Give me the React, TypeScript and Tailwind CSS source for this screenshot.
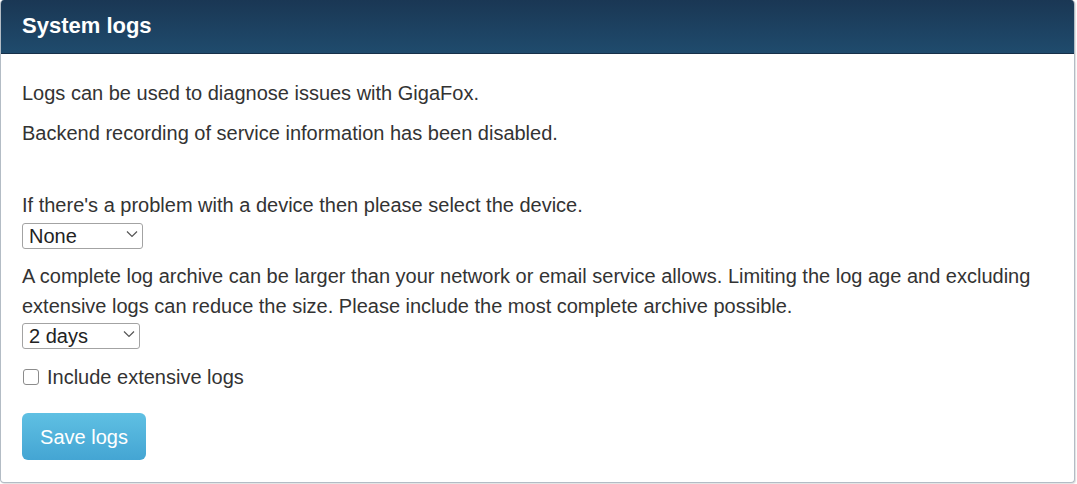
import React from 'react';

const FONT = "font-['Liberation_Sans',Arial,sans-serif]";

function Chevron() {
  return (
    <svg
      className="pointer-events-none absolute right-[5px] top-1/2 -translate-y-1/2"
      width="12"
      height="7"
      viewBox="0 0 12 7"
      fill="none"
    >
      <path d="M1 1l5 5 5-5" stroke="#555" strokeWidth="1.2" />
    </svg>
  );
}

function Select({ value, options, width, className = '' }: { value: string; options: string[]; width: string; className?: string }) {
  return (
    <div className={`relative ${width} h-[26px] ${className}`}>
      <select
        defaultValue={value}
        className="h-full w-full appearance-none rounded-[3px] border border-[#a3a3a3] bg-white pl-[6px] text-[20px] leading-[24px] text-[#222] outline-none"
      >
        {options.map((o) => (
          <option key={o}>{o}</option>
        ))}
      </select>
      <Chevron />
    </div>
  );
}

export default function App() {
  return (
    <div className={`${FONT} bg-white w-[1077px] h-[484px]`}>
      <div className="w-[1075px] h-[483px] overflow-hidden rounded-[4px] border border-[#b3bcc5] border-t-0 bg-white shadow-[1px_1px_1px_rgba(0,0,0,0.12)]">
        {/* Header */}
        <div className="h-[54px] px-[21px] flex items-center bg-gradient-to-b from-[#1a3754] to-[#1f4b6d] border-b border-[#163049]">
          <h1 className="text-[22px] font-bold text-white leading-none pb-[1px]">System logs</h1>
        </div>

        {/* Body */}
        <div className="px-[21px] pt-[24px] text-[20px] leading-[30px] text-[#333]">
          <p className="mb-[10px]">Logs can be used to diagnose issues with GigaFox.</p>
          <p className="mb-[10px]">Backend recording of service information has been disabled.</p>
          <div className="h-[32px]" />

          <p>If there's a problem with a device then please select the device.</p>
          <Select value="None" options={['None']} width="w-[121px]" className="mt-[1px]" />

          <p className="mt-[14px]">
            A complete log archive can be larger than your network or email service allows. Limiting the log age and
            excluding extensive logs can reduce the size. Please include the most complete archive possible.
          </p>
          <Select value="2 days" options={['1 day', '2 days', '7 days', '30 days']} width="w-[118px]" />

          <label className="mt-[15px] flex items-center gap-[8px]">
            <span className="ml-[1px] h-[16px] w-[16px] rounded-[3px] border border-[#8c8c8c] bg-white" />
            <span>Include extensive logs</span>
          </label>

          <button className="mt-[21px] h-[47px] w-[124px] rounded-[6px] bg-gradient-to-b from-[#5fc0e3] to-[#44a5d3] text-[20px] text-white">
            Save logs
          </button>
        </div>
      </div>
    </div>
  );
}
